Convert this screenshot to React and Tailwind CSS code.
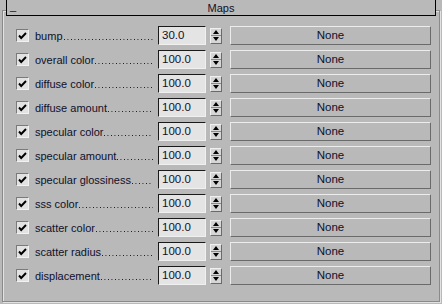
import React from "react";

const rows = [
  ["bump", "30.0"],
  ["overall color", "100.0"],
  ["diffuse color", "100.0"],
  ["diffuse amount", "100.0"],
  ["specular color", "100.0"],
  ["specular amount", "100.0"],
  ["specular glossiness", "100.0"],
  ["sss color", "100.0"],
  ["scatter color", "100.0"],
  ["scatter radius", "100.0"],
  ["displacement", "100.0"],
];

function Check() {
  return (
    <div className="w-[13px] h-[13px] bg-[#e2e2e2] border-t border-l border-[#7a7a7a] border-r-[#f2f2f2] border-b-[#f2f2f2] border-r border-b flex items-center justify-center">
      <svg width="9" height="8" viewBox="0 0 9 8">
        <path d="M1 3.5 L3.2 6 L8 1" fill="none" stroke="#000" strokeWidth="1.9" />
      </svg>
    </div>
  );
}

function Spinner() {
  return (
    <div className="w-[12px] h-[16px] flex flex-col bg-[#d6d6d6] border-t border-l border-[#f0f0f0] border-r border-b border-r-[#6a6a6a] border-b-[#6a6a6a]">
      <div className="flex-1 flex items-center justify-center border-b border-[#8a8a8a]">
        <svg width="6" height="4" viewBox="0 0 6 4"><path d="M0 4 L3 0 L6 4 Z" fill="#000" /></svg>
      </div>
      <div className="flex-1 flex items-center justify-center">
        <svg width="6" height="4" viewBox="0 0 6 4"><path d="M0 0 L3 4 L6 0 Z" fill="#000" /></svg>
      </div>
    </div>
  );
}

function Leader() {
  return (
    <div className="flex-1 h-[14px] flex items-end pb-[3px] overflow-hidden">
      <div className="w-full h-[1px] bg-[linear-gradient(to_right,#10102a_1px,transparent_1px)] bg-[length:3.5px_1px] bg-repeat-x" />
    </div>
  );
}

export default function App() {
  return (
    <div
      className="w-[442px] h-[304px] bg-[#b9b9b9] flex flex-col text-[#10102a]"
      style={{ fontFamily: '"Liberation Sans", Arial, sans-serif' }}
    >
      <div className="relative z-10 mx-[6px] h-[16px] border border-t-0 border-black bg-[#b9b9b9] flex items-center">
        <span className="absolute left-[3px] top-[-1px] text-[11px] leading-[14px]">_</span>
        <span className="flex-1 text-center text-[11px] leading-[14px]">Maps</span>
      </div>
      <div className="mx-[2px] mt-[-6px] h-[292px] border border-[#8a8a8a] shadow-[inset_1px_1px_0_#e2e2e2,1px_1px_0_#e2e2e2] pt-[15px] pl-[13px] flex flex-col gap-[5px]">
        {rows.map(([label, val]) => (
          <div key={label} className="h-[19px] flex items-center">
            <Check />
            <div className="ml-[6px] w-[118px] flex items-center whitespace-nowrap text-[11px] leading-[14px]">
              <span className="pr-[1px]">{label}</span>
              <Leader />
            </div>
            <div className="ml-[5px] w-[48px] h-[19px] bg-[#e4e4e4] border-t border-l border-[#1a1a1a] border-r border-b border-r-[#f0f0f0] border-b-[#f0f0f0] text-[11.5px] leading-[17px] pl-[3px]">
              {val}
            </div>
            <div className="ml-[4px]">
              <Spinner />
            </div>
            <div className="ml-[8px] w-[201px] h-[19px] border-t border-l border-[#ececec] border-r border-b border-r-[#6a6a6a] border-b-[#6a6a6a] flex items-center justify-center text-[11.5px]">
              None
            </div>
          </div>
        ))}
      </div>
    </div>
  );
}
